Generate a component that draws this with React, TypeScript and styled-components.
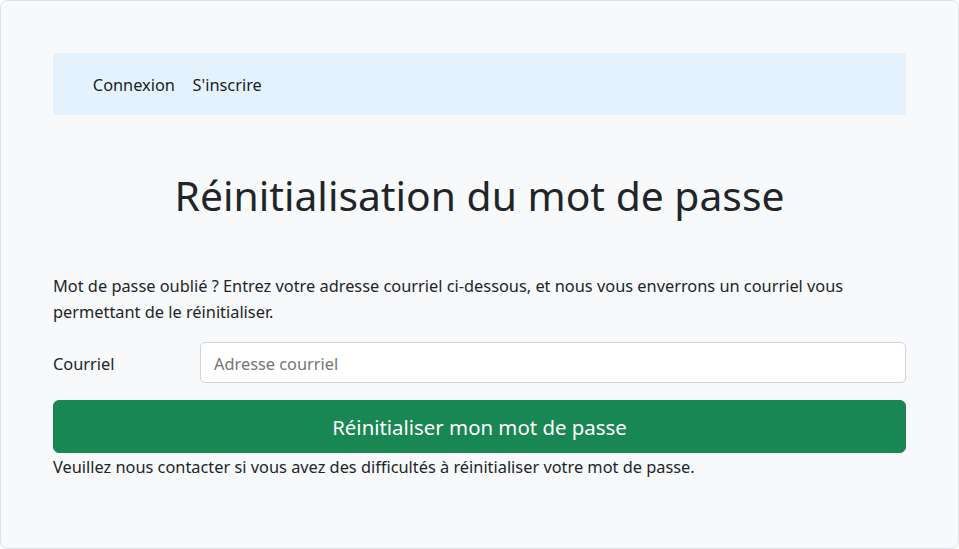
import styled, { createGlobalStyle } from 'styled-components';

const GlobalStyle = createGlobalStyle`
  html, body {
    margin: 0;
    padding: 0;
    background: #ffffff;
  }
  body {
    font-family: 'Noto Sans', 'Open Sans', sans-serif;
    font-size: 16.35px;
    line-height: 26.4px;
    color: #212529;
  }
  * {
    box-sizing: border-box;
  }
`;

export default function App() {
  return (
    <>
      <GlobalStyle />
      <Frame>
        <NavBar>
          <NavLink href="#">Connexion</NavLink>
          <NavLink href="#">S&apos;inscrire</NavLink>
        </NavBar>
        <Title>Réinitialisation du mot de passe</Title>
        <Intro>
          Mot de passe oublié ? Entrez votre adresse courriel ci-dessous, et nous vous enverrons un
          courriel vous permettant de le réinitialiser.
        </Intro>
        <FieldRow>
          <Label htmlFor="email">Courriel</Label>
          <Input id="email" type="email" placeholder="Adresse courriel" />
        </FieldRow>
        <SubmitButton type="button">Réinitialiser mon mot de passe</SubmitButton>
        <HelpText>
          Veuillez nous contacter si vous avez des difficultés à réinitialiser votre mot de passe.
        </HelpText>
      </Frame>
    </>
  );
}

const Frame = styled.div`
  width: 959px;
  height: 549px;
  padding: 52px 52px 0;
  background: #f8f9fa;
  border: 1px solid #dee2e6;
  border-radius: 7px;
  display: flex;
  flex-direction: column;
`;

const NavBar = styled.nav`
  height: 62px;
  padding: 3px 31px 0;
  background: #e3f2fd;
  display: flex;
  align-items: center;
`;

const NavLink = styled.a`
  padding: 0 8.8px;
  color: rgba(0, 0, 0, 0.9);
  text-decoration: none;
`;

const Title = styled.h1`
  margin: 54px 0 51px;
  font-size: 40.8px;
  font-weight: 400;
  line-height: 52.8px;
  text-align: center;
`;

const Intro = styled.p`
  margin: 0 0 16px;
`;

const FieldRow = styled.div`
  display: grid;
  grid-template-columns: 147px 1fr;
  align-items: center;
  margin-bottom: 17px;
`;

const Label = styled.label`
  padding-top: 4px;
`;

const Input = styled.input`
  height: 41px;
  padding: 3px 13px 0;
  font: inherit;
  color: #212529;
  background: #ffffff;
  border: 1px solid #ced4da;
  border-radius: 5px;
  outline: none;
  ::placeholder {
    color: #6c757d;
  }
`;

const SubmitButton = styled.button`
  height: 53px;
  padding-top: 3px;
  font-family: inherit;
  font-size: 20.4px;
  color: #ffffff;
  background: #198754;
  border: 1px solid #198754;
  border-radius: 6px;
  cursor: pointer;
`;

const HelpText = styled.div`
  padding-top: 1px;
`;
